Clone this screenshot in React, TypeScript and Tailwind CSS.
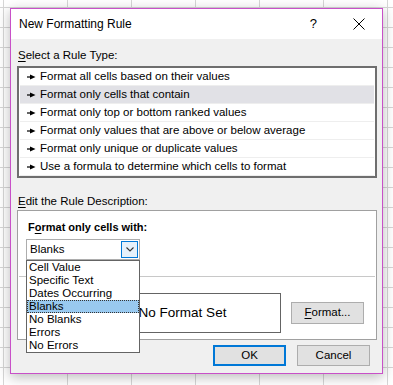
import React from "react";

const rules = [
  "Format all cells based on their values",
  "Format only cells that contain",
  "Format only top or bottom ranked values",
  "Format only values that are above or below average",
  "Format only unique or duplicate values",
  "Use a formula to determine which cells to format",
];

const options = [
  "Cell Value",
  "Specific Text",
  "Dates Occurring",
  "Blanks",
  "No Blanks",
  "Errors",
  "No Errors",
];

function Arrow() {
  return (
    <svg width="9" height="6" viewBox="0 0 9 6" className="shrink-0">
      <rect x="0" y="2.4" width="4" height="1.2" fill="#000" />
      <path d="M3 0.5 L8.5 3 L3 5.5 Z" fill="#000" />
    </svg>
  );
}

export default function App() {
  return (
    <div className="w-[393px] h-[385px] overflow-hidden bg-white bg-[linear-gradient(to_right,#d6d6d6_1px,transparent_1px),linear-gradient(to_bottom,#d6d6d6_1px,transparent_1px)] bg-[size:64px_20px] bg-[position:3px_7px] pl-[10px] pt-[8px] font-['Liberation_Sans',Arial,sans-serif] text-[11.5px] text-black">
      <div className="relative w-[373px] h-[366px] border border-[#c850c8] bg-[#f0f0f0] shadow-[0_3px_12px_rgba(0,0,0,0.28)] flex flex-col">
        {/* Title bar */}
        <div className="h-[30px] bg-white flex items-center pl-[8px] shrink-0">
          <span className="text-[12px]">New Formatting Rule</span>
          <span className="ml-auto mr-[36px] text-[13px]">?</span>
          <svg width="12" height="12" viewBox="0 0 12 12" className="mr-[17px]">
            <path d="M0.5 0.5 L11.5 11.5 M11.5 0.5 L0.5 11.5" stroke="#000" strokeWidth="1" />
          </svg>
        </div>

        {/* Body */}
        <div className="flex flex-col pl-[6px] pr-[5px]">
          <div className="h-[16px] leading-[16px] mt-[8px] pl-[1px]">
            <span className="underline underline-offset-2">S</span>elect a Rule Type:
          </div>
          <div className="mt-[3px] h-[112px] border-2 border-[#6e6e6e] bg-white flex flex-col">
            {rules.map((r, i) => (
              <div
                key={r}
                className={
                  "h-[18px] flex items-center gap-[4px] pl-[7px] mx-[1px] border-b border-[#eeeeee] " +
                  (i === 1 ? "bg-[#e1e1e6]" : "")
                }
              >
                <Arrow />
                <span>{r}</span>
              </div>
            ))}
          </div>

          <div className="h-[16px] leading-[16px] mt-[15px] pl-[1px]">
            <span className="underline underline-offset-2">E</span>dit the Rule Description:
          </div>
          <div className="mt-[1px] h-[130px] border border-[#a0a0a0] bg-white flex flex-col">
            <div className="h-[16px] leading-[16px] mt-[8px] pl-[10px] font-bold text-[11px]">
              F<span className="underline underline-offset-2">o</span>rmat only cells with:
            </div>
            <div className="mt-[4px] ml-[8px] w-[114px] h-[21px] border border-[#adadad] bg-white flex items-center pl-[3px] pr-[1px]">
              <span>Blanks</span>
              <div className="ml-auto w-[17px] h-[17px] border border-[#0078d7] bg-[#e5f1fb] flex items-center justify-center">
                <svg width="8" height="5" viewBox="0 0 8 5">
                  <path d="M0.5 0.5 L4 4 L7.5 0.5" fill="none" stroke="#333" strokeWidth="1.1" />
                </svg>
              </div>
            </div>
            <div className="mt-[16px] mx-[1px] h-px bg-[#c8c8c8]" />
            <div className="mt-[16px] flex items-center pl-[10px] pr-[12px]">
              <div className="ml-auto w-[197px] h-[40px] border border-[#646464] flex items-center justify-center text-[13.5px]">
                No Format Set
              </div>
              <div className="ml-[10px] w-[73px] h-[22px] border border-[#adadad] bg-[#e1e1e1] flex items-center justify-center">
                <span>
                  <span className="underline underline-offset-2">F</span>ormat...
                </span>
              </div>
            </div>
          </div>
        </div>

        {/* Buttons */}
        <div className="mt-[5px] flex justify-end gap-[11px] pr-[12px]">
          <div className="w-[73px] h-[21px] border-2 border-[#0078d7] bg-[#e1e1e1] flex items-center justify-center">
            OK
          </div>
          <div className="w-[73px] h-[21px] border border-[#adadad] bg-[#e1e1e1] flex items-center justify-center">
            Cancel
          </div>
        </div>

        {/* Dropdown list overlay */}
        <div className="absolute left-[15px] top-[251px] w-[114px] h-[93px] border border-[#646464] bg-white flex flex-col">
          {options.map((o) => (
            <div
              key={o}
              className={
                "h-[13px] leading-[13px] pl-[2px] " +
                (o === "Blanks" ? "bg-[#99c9ef] outline outline-1 outline-dotted outline-[#333] -outline-offset-1" : "")
              }
            >
              {o}
            </div>
          ))}
        </div>
      </div>
    </div>
  );
}
